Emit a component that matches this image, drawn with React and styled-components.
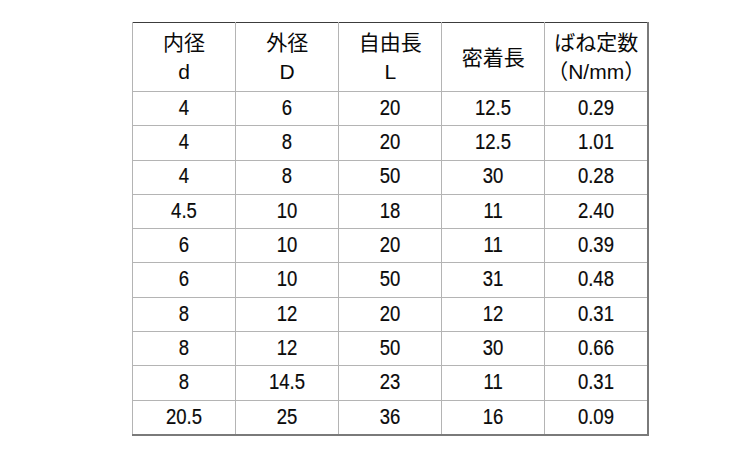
import React from "react";
import styled, { createGlobalStyle } from "styled-components";

const GlobalStyle = createGlobalStyle`
  html, body {
    margin: 0;
    background: #ffffff;
  }
`;

const columns = [
  ["内径", "d"],
  ["外径", "D"],
  ["自由長", "L"],
  ["密着長"],
  ["ばね定数", "（N/mm）"],
];

const rows = [
  ["4", "6", "20", "12.5", "0.29"],
  ["4", "8", "20", "12.5", "1.01"],
  ["4", "8", "50", "30", "0.28"],
  ["4.5", "10", "18", "11", "2.40"],
  ["6", "10", "20", "11", "0.39"],
  ["6", "10", "50", "31", "0.48"],
  ["8", "12", "20", "12", "0.31"],
  ["8", "12", "50", "30", "0.66"],
  ["8", "14.5", "23", "11", "0.31"],
  ["20.5", "25", "36", "16", "0.09"],
];

export default function App() {
  return (
    <Page>
      <GlobalStyle />
      <SpecTable>
        <thead>
          <tr>
            {columns.map((lines, i) => (
              <HeadCell key={i}>
                {lines.map((line) => (
                  <HeadLine key={line}>{line}</HeadLine>
                ))}
              </HeadCell>
            ))}
          </tr>
        </thead>
        <tbody>
          {rows.map((row, r) => (
            <tr key={r}>
              {row.map((value, c) => (
                <Cell key={c}>
                  <Num>{value}</Num>
                </Cell>
              ))}
            </tr>
          ))}
        </tbody>
      </SpecTable>
    </Page>
  );
}

const Page = styled.div`
  width: 750px;
  height: 450px;
  box-sizing: border-box;
  padding: 22px 0 0 132px;
  font-family: "Liberation Sans", "Noto Sans CJK JP", sans-serif;
  color: #0a0a0a;
`;

const SpecTable = styled.table`
  border-collapse: collapse;
  table-layout: fixed;
  width: 517px;
  border-top: 1px solid #3c3c3c;
  border-left: 1px solid #9a9a9a;
  border-right: 2px solid #7a7a7a;
  border-bottom: 2px solid #7a7a7a;
`;

const HeadCell = styled.th`
  height: 68px;
  padding: 0;
  font-weight: normal;
  text-align: center;
  vertical-align: middle;
  border-left: 1px solid #b4b4b4;
  border-bottom: 1px solid #b4b4b4;
`;

const HeadLine = styled.div`
  font-size: 21px;
  line-height: 29px;
`;

const Cell = styled.td`
  height: 33.3px;
  padding: 0;
  text-align: center;
  vertical-align: middle;
  line-height: 1;
  border-left: 1px solid #b4b4b4;
  border-bottom: 1px solid #b4b4b4;
`;

const Num = styled.span`
  display: inline-block;
  font-size: 21.5px;
  transform: scaleX(0.86);
  -webkit-text-stroke: 0.2px #0a0a0a;
`;
